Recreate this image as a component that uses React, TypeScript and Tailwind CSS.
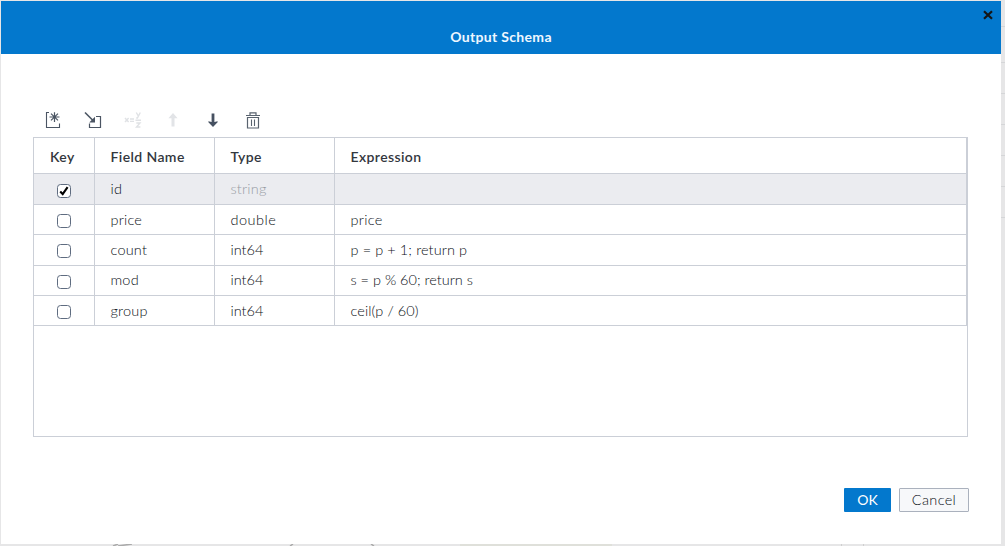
import React from "react";

type Row = {
  name: string;
  type: string;
  expression: string;
  isKey?: boolean;
  height: string;
  typeSpacing: string;
  spacing: string;
};

const rows: Row[] = [
  { name: "id", type: "string", expression: "", isKey: true, height: "h-[31px] leading-[30px]", typeSpacing: "tracking-[0.2px]", spacing: "" },
  { name: "price", type: "double", expression: "price", height: "h-[30px] leading-[30px]", typeSpacing: "tracking-[0.5px]", spacing: "tracking-[0.3px]" },
  { name: "count", type: "int64", expression: "p = p + 1; return p", height: "h-[31px] leading-[30px]", typeSpacing: "tracking-normal", spacing: "tracking-[0.1px]" },
  { name: "mod", type: "int64", expression: "s = p % 60; return s", height: "h-[30px] leading-[28px]", typeSpacing: "tracking-normal", spacing: "tracking-normal" },
  { name: "group", type: "int64", expression: "ceil(p / 60)", height: "h-[30px] leading-[30px]", typeSpacing: "tracking-normal", spacing: "tracking-[0.1px]" },
];

const columns = "grid grid-cols-[61px_120px_120px_1fr]";

function NewFieldIcon() {
  return (
    <svg width="16" height="18" viewBox="0 0 16 18" fill="none" stroke="#4b5563">
      <path d="M4 1.5H1.5V16.5H14.5V12.5" strokeWidth="1.1" />
      <path d="M9.5 1.2V11M4.5 6H14.5M6 2.6L13 9.4M13 2.6L6 9.4" strokeWidth="1.2" />
    </svg>
  );
}

function ImportIcon() {
  return (
    <svg width="18" height="18" viewBox="0 0 18 18" fill="none" stroke="#4b5563">
      <path d="M12 5.5H16.5V16.5H5.5V12.5" strokeWidth="1.2" />
      <path d="M1 1.5L9 9.5" strokeWidth="1.6" />
      <path d="M11 11.5H5.2L11 5.7Z" fill="#4b5563" stroke="none" />
    </svg>
  );
}

function ExpressionIcon() {
  return (
    <svg width="18" height="18" viewBox="0 0 18 18" fill="none" stroke="#e0e2e5" strokeWidth="1.4">
      <path d="M1 7L4.6 11M4.6 7L1 11M6 8H10M6 10.4H10M11.5 9.2H17" />
      <path d="M12.3 1.5L14.3 5M16.3 1.5L13.4 7H12.2M12.3 12H16L12.5 16H16.4" />
    </svg>
  );
}

function UpIcon() {
  return (
    <svg width="10" height="14" viewBox="0 0 10 14" fill="#e2e4e7">
      <path d="M5 0L9.6 5.2H6.5V13.5H3.5V5.2H0.4Z" />
    </svg>
  );
}

function DownIcon() {
  return (
    <svg width="10" height="14" viewBox="0 0 10 14" fill="#465161">
      <path d="M5 14L0.4 9.2V8.2L3.6 9V0.5H6.4V9L9.6 8.2V9.2Z" />
    </svg>
  );
}

function TrashIcon() {
  return (
    <svg width="14" height="17" viewBox="0 0 14 17" fill="none" stroke="#59636f">
      <path d="M4 3V0.9H10V3M0 3.5H14" strokeWidth="1.2" />
      <path d="M1.5 5.5H12.5V16H1.5Z" strokeWidth="1.2" />
      <path d="M5.5 7.5V14M8.5 7.5V14" strokeWidth="1.1" />
    </svg>
  );
}

function Checkbox({ checked }: { checked?: boolean }) {
  return (
    <span className="flex size-[14px] items-center justify-center rounded-[3.5px] border border-[#5f6c80] bg-white">
      {checked && (
        <svg width="10" height="10" viewBox="0 0 10 10" fill="none" stroke="#000" strokeWidth="2.1">
          <path d="M1.2 5.6L3.7 8.1L8.6 1.2" />
        </svg>
      )}
    </span>
  );
}

export default function App() {
  return (
    <div className="relative flex h-[546px] w-[1005px] overflow-hidden bg-[#e6e6e7] pt-px pl-px font-['Lato','Liberation_Sans',sans-serif] text-[14.5px] text-[#0c1016]">
      <div className="flex h-[543px] w-[1000px] shrink-0 flex-col bg-white">
        <header className="relative flex h-[53px] shrink-0 justify-center bg-[#0378cd]">
          <h1 className="mt-[26px] text-[14px] leading-5 font-bold tracking-[0.33px] text-[#eef7ff]">Output Schema</h1>
          <button className="absolute top-[9px] right-[8px]" aria-label="Close">
            <svg width="10" height="10" viewBox="0 0 10 10" fill="none" stroke="#151515" strokeWidth="2.2">
              <path d="M1 1.2L9 8.8M9 1.2L1 8.8" />
            </svg>
          </button>
        </header>

        <div className="flex h-[83px] shrink-0 items-end pb-[8px] pl-[32px]">
          <div className="flex h-[18px] items-center">
            <span className="flex w-10 justify-center"><NewFieldIcon /></span>
            <span className="flex w-10 justify-center"><ImportIcon /></span>
            <span className="flex w-10 justify-center"><ExpressionIcon /></span>
            <span className="flex w-10 justify-center"><UpIcon /></span>
            <span className="flex w-10 justify-center"><DownIcon /></span>
            <span className="flex w-10 justify-center"><TrashIcon /></span>
          </div>
        </div>

        <div className="ml-[32px] h-[300px] w-[935px] shrink-0 border border-[#cbcfd7]">
          <div className={`${columns} h-9 border-b border-[#cbcfd7] text-[14px] leading-[38px] font-semibold tracking-[0.4px] text-[#33373e]`}>
            <div className="border-r border-[#cbcfd7] pl-4">Key</div>
            <div className="border-r border-[#cbcfd7] pl-[15.5px]">Field Name</div>
            <div className="border-r border-[#cbcfd7] pl-[15.5px]">Type</div>
            <div className="border-r border-[#cbcfd7] pl-[15.5px]">Expression</div>
          </div>
          {rows.map((row) => (
            <div
              key={row.name}
              className={`${columns} ${row.height} border-b border-[#cbcfd7] font-light ${row.isKey ? "bg-[#ebecf0]" : ""}`}
            >
              <div className={`border-r border-[#cbcfd7] pl-[23px] ${row.isKey ? "pt-[10px]" : "pt-[9px]"}`}>
                <Checkbox checked={row.isKey} />
              </div>
              <div className="border-r border-[#cbcfd7] pl-[15.5px] tracking-[0.2px]">{row.name}</div>
              <div className={`border-r border-[#cbcfd7] pl-[15.5px] ${row.typeSpacing} ${row.isKey ? "text-[#979ca4]" : ""}`}>{row.type}</div>
              <div className={`border-r border-[#cbcfd7] pl-[15.5px] ${row.spacing}`}>{row.expression}</div>
            </div>
          ))}
        </div>

        <footer className="mt-[51px] flex h-6 justify-end gap-2 pr-8 text-[14px] leading-6">
          <button className="w-[47px] rounded-[1px] bg-[#0378cd] text-white">OK</button>
          <button className="w-[70px] rounded-[1px] border border-[#aab1bd] bg-[#f7f8fa] text-[14.5px] leading-[22px] font-light tracking-[0.35px]">Cancel</button>
        </footer>
      </div>

      <div className="w-1 pt-[25px]">
        <div className="h-px bg-[#d5d6d8]" />
        <div className="mt-[35px] flex flex-col gap-[30px]">
          {[0, 1, 2, 3, 4, 5].map((line) => (
            <div key={line} className="h-px bg-[#d5d6d8]" />
          ))}
        </div>
      </div>

      <svg className="absolute bottom-0 left-0" width="1005" height="2" viewBox="0 0 1005 2" fill="none">
        <path d="M460 0H612V2H460Z" fill="#dfe0da" />
        <path d="M113 2L118 0M118 2L132 0M290 2L293 0M371 0L374 2" stroke="#aaa" strokeWidth="1.5" />
        <path d="M841.5 0V2M863.5 0V2" stroke="#cfcfcf" />
      </svg>
    </div>
  );
}
